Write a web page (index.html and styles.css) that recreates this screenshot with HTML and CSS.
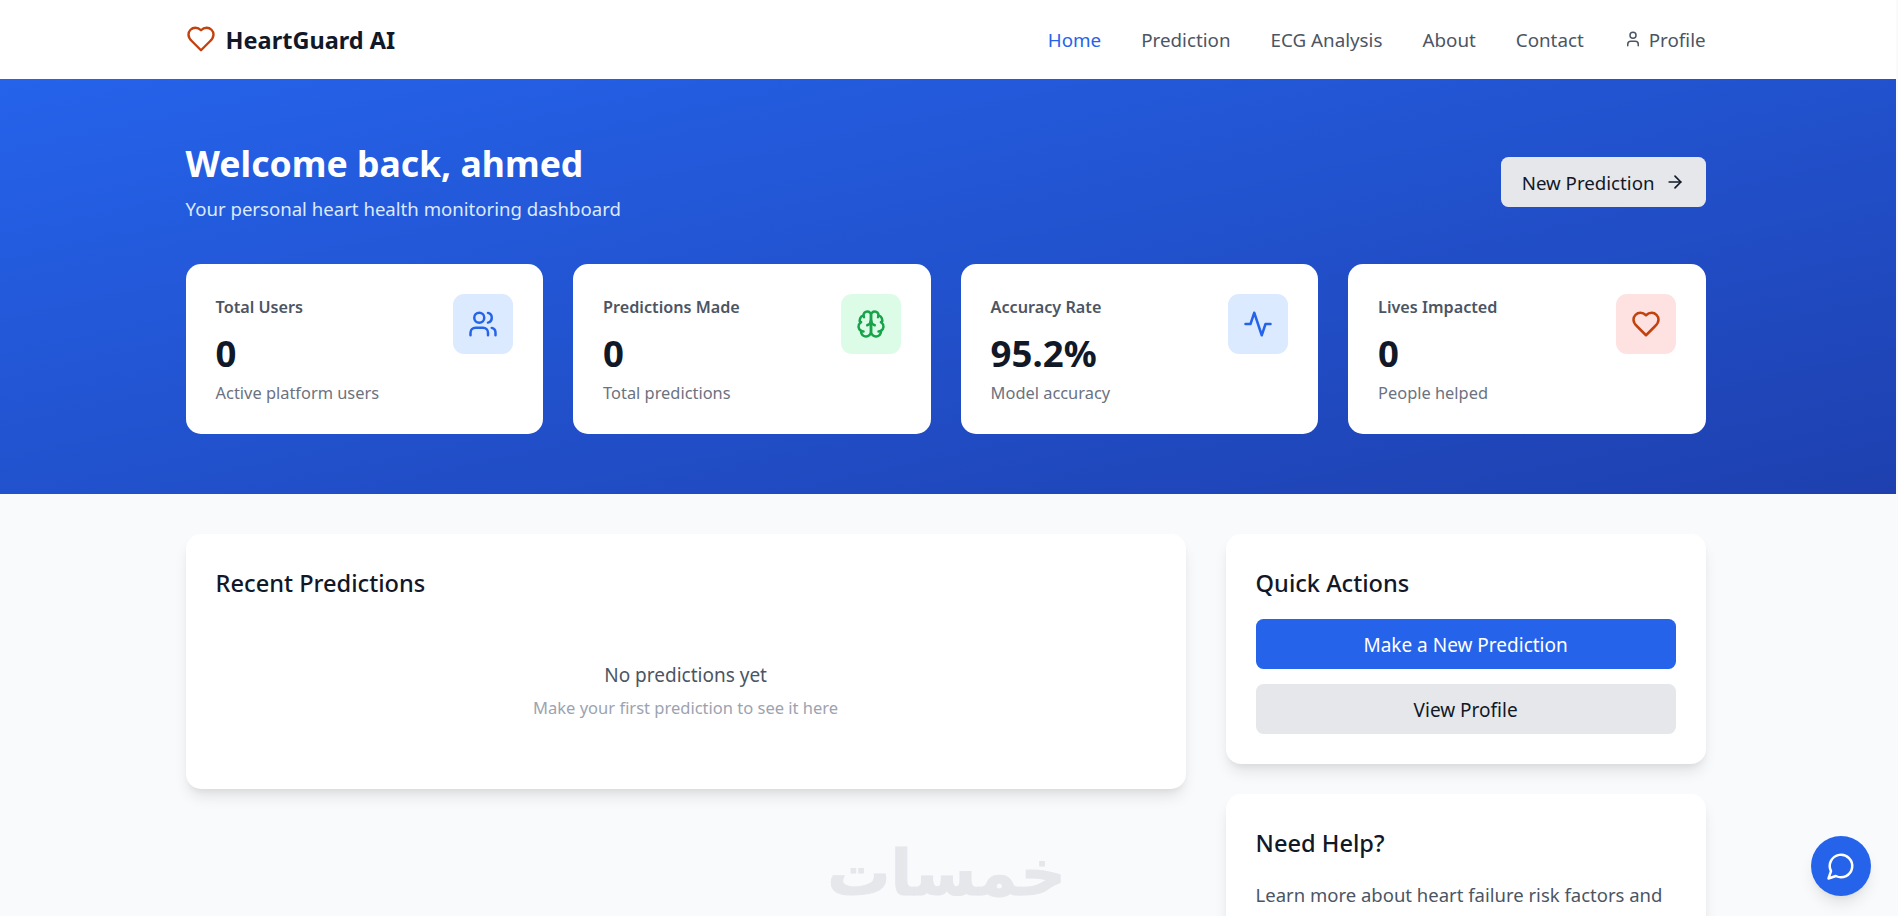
FILE: index.html
```html
<!DOCTYPE html>
<html lang="en">
<head>
<meta charset="utf-8">
<title>HeartGuard AI</title>
<link rel="stylesheet" href="styles.css">
</head>
<body>
<header class="nav">
  <div class="wrap nav-row">
    <a class="brand" href="#">
      <svg class="ico brand-ico" viewBox="0 0 24 24"><path d="M19 14c1.49-1.46 3-3.21 3-5.5A5.5 5.5 0 0 0 16.5 3c-1.76 0-3 .5-4.5 2-1.5-1.5-2.74-2-4.5-2A5.5 5.5 0 0 0 2 8.5c0 2.3 1.5 4.05 3 5.5l7 7Z"/></svg>
      <span>HeartGuard AI</span>
    </a>
    <nav class="links">
      <a class="link active" href="#">Home</a>
      <a class="link" href="#">Prediction</a>
      <a class="link" href="#">ECG Analysis</a>
      <a class="link" href="#">About</a>
      <a class="link" href="#">Contact</a>
      <a class="link profile" href="#">
        <svg class="ico user-ico" viewBox="0 0 24 24"><path d="M19 21v-2a4 4 0 0 0-4-4H9a4 4 0 0 0-4 4v2"/><circle cx="12" cy="7" r="4"/></svg>
        Profile
      </a>
    </nav>
  </div>
</header>

<section class="hero">
  <div class="wrap">
    <div class="hero-top">
      <div>
        <h1 class="hero-title">Welcome back, ahmed</h1>
        <p class="hero-sub">Your personal heart health monitoring dashboard</p>
      </div>
      <a class="btn btn-gray btn-hero" href="#">New Prediction
        <svg class="ico arrow-ico" viewBox="0 0 24 24"><path d="M5 12h14"/><path d="m12 5 7 7-7 7"/></svg>
      </a>
    </div>
    <div class="stats">
      <div class="stat">
        <div>
          <p class="stat-label">Total Users</p>
          <p class="stat-value">0</p>
          <p class="stat-note">Active platform users</p>
        </div>
        <div class="stat-icon tint-blue">
          <svg class="ico" viewBox="0 0 24 24"><path d="M16 21v-2a4 4 0 0 0-4-4H6a4 4 0 0 0-4 4v2"/><circle cx="9" cy="7" r="4"/><path d="M22 21v-2a4 4 0 0 0-3-3.87"/><path d="M16 3.13a4 4 0 0 1 0 7.75"/></svg>
        </div>
      </div>
      <div class="stat">
        <div>
          <p class="stat-label">Predictions Made</p>
          <p class="stat-value">0</p>
          <p class="stat-note">Total predictions</p>
        </div>
        <div class="stat-icon tint-green">
          <svg class="ico" viewBox="0 0 24 24"><path d="M12 5a3 3 0 1 0-5.997.125 4 4 0 0 0-2.526 5.77 4 4 0 0 0 .556 6.588A4 4 0 1 0 12 18Z"/><path d="M12 5a3 3 0 1 1 5.997.125 4 4 0 0 1 2.526 5.77 4 4 0 0 1-.556 6.588A4 4 0 1 1 12 18Z"/><path d="M15 13a4.5 4.5 0 0 1-3-4 4.5 4.5 0 0 1-3 4"/><path d="M17.599 6.5a3 3 0 0 0 .399-1.375"/><path d="M6.003 5.125A3 3 0 0 0 6.401 6.5"/><path d="M3.477 10.896a4 4 0 0 1 .585-.396"/><path d="M19.938 10.5a4 4 0 0 1 .585.396"/><path d="M6 18a4 4 0 0 1-1.967-.516"/><path d="M19.967 17.484A4 4 0 0 1 18 18"/></svg>
        </div>
      </div>
      <div class="stat">
        <div>
          <p class="stat-label">Accuracy Rate</p>
          <p class="stat-value">95.2%</p>
          <p class="stat-note">Model accuracy</p>
        </div>
        <div class="stat-icon tint-blue">
          <svg class="ico" viewBox="0 0 24 24"><path d="M22 12h-4l-3 9L9 3l-3 9H2"/></svg>
        </div>
      </div>
      <div class="stat">
        <div>
          <p class="stat-label">Lives Impacted</p>
          <p class="stat-value">0</p>
          <p class="stat-note">People helped</p>
        </div>
        <div class="stat-icon tint-red">
          <svg class="ico" viewBox="0 0 24 24"><path d="M19 14c1.49-1.46 3-3.21 3-5.5A5.5 5.5 0 0 0 16.5 3c-1.76 0-3 .5-4.5 2-1.5-1.5-2.74-2-4.5-2A5.5 5.5 0 0 0 2 8.5c0 2.3 1.5 4.05 3 5.5l7 7Z"/></svg>
        </div>
      </div>
    </div>
  </div>
</section>

<main class="wrap content">
  <section class="card recent">
    <h2 class="card-title">Recent Predictions</h2>
    <div class="empty">
      <p class="empty-main">No predictions yet</p>
      <p class="empty-sub">Make your first prediction to see it here</p>
    </div>
  </section>
  <aside class="side">
    <section class="card">
      <h2 class="card-title">Quick Actions</h2>
      <div class="actions">
        <a class="btn btn-blue" href="#">Make a New Prediction</a>
        <a class="btn btn-gray" href="#">View Profile</a>
      </div>
    </section>
    <section class="card">
      <h2 class="card-title">Need Help?</h2>
      <p class="help-text">Learn more about heart failure risk factors and</p>
    </section>
  </aside>
</main>

<div class="watermark" lang="ar" dir="rtl">خمسات</div>
<button class="chat" type="button" aria-label="Chat">
  <svg class="ico" viewBox="0 0 24 24"><path d="M7.9 20A9 9 0 1 0 4 16.1L2 22Z"/></svg>
</button>
</body>
</html>
```
FILE: styles.css
```css
* { box-sizing: border-box; }
html, body { height: 100%; }
body {
  margin: 0;
  overflow: hidden;
  background: #f9fafb;
  color: #111827;
  font-family: "Noto Sans", "Open Sans", sans-serif;
}
p, h1, h2 { margin: 0; }
a { text-decoration: none; color: inherit; }

.wrap { margin-left: 185.6px; width: 1520px; }
.ico { fill: none; stroke: currentColor; stroke-width: 2; stroke-linecap: round; stroke-linejoin: round; display: block; }

.nav { background: #fff; height: 79px; margin-right: 2px; }
.nav-row { height: 79px; display: flex; align-items: center; justify-content: space-between; }
.brand { display: flex; align-items: center; gap: 10px; font-size: 23.5px; font-weight: 700; color: #111827; }
.brand-ico { width: 30px; height: 30px; color: #c2410c; stroke-width: 1.9; margin-top: -1px; }
.links { display: flex; gap: 40px; align-items: center; }
.link { font-size: 18.8px; color: #4b5563; line-height: 24px; }
.link.active { color: #2563eb; }
.profile { display: flex; align-items: center; gap: 7px; }
.user-ico { width: 18px; height: 18px; margin-top: -2px; }

.hero { height: 415px; padding-top: 60px; margin-right: 2px; background: linear-gradient(to bottom right, #2563eb, #1e40af); }
.hero-top { display: flex; justify-content: space-between; align-items: flex-start; height: 125px; }
.hero-title { font-size: 35.6px; line-height: 48px; font-weight: 700; color: #fff; }
.hero-sub { font-size: 18.6px; line-height: 28px; color: #dbeafe; margin-top: 8px; }

.btn { display: flex; align-items: center; justify-content: center; height: 50px; padding-top: 2px; border-radius: 7.5px; font-size: 19px; }
.btn-gray { background: #e5e7eb; color: #111827; }
.btn-blue { background: #2563eb; color: #fff; }
.btn-hero { width: 205px; gap: 10px; margin-top: 18px; padding-top: 0; font-size: 18.7px; }
.arrow-ico { width: 20px; height: 20px; }

.stats { display: grid; grid-template-columns: repeat(4, 1fr); gap: 30px; }
.stat { height: 170px; padding: 30px; border-radius: 15px; background: #fff; display: flex; justify-content: space-between; align-items: flex-start; }
.stat-label { font-size: 16.2px; line-height: 24px; font-weight: 600; color: #4b5563; margin-top: 1px; }
.stat-value { font-size: 36.6px; line-height: 50px; font-weight: 700; color: #111827; margin-top: 9px; }
.stat-note { font-size: 16.4px; line-height: 24px; color: #6b7280; margin-top: 3px; }
.stat-icon { width: 60px; height: 60px; border-radius: 11px; display: flex; align-items: center; justify-content: center; }
.stat-icon .ico { width: 30px; height: 30px; }
.tint-blue { background: #dbeafe; color: #2563eb; }
.tint-green { background: #dcfce7; color: #16a34a; }
.tint-red { background: #fee2e2; color: #c2410c; }

.content { display: grid; grid-template-columns: 1fr 480px; gap: 40px; align-items: start; padding-top: 40px; }
.card { background: #fff; border-radius: 15px; padding: 30px; box-shadow: 0 10px 15px -3px rgba(0,0,0,.1), 0 4px 6px -2px rgba(0,0,0,.05); }
.card-title { font-size: 23.6px; line-height: 38px; font-weight: 500; color: #111827; }
.recent { height: 255px; }
.empty { text-align: center; padding-top: 59px; }
.empty-main { font-size: 19px; line-height: 28px; color: #4b5563; }
.empty-sub { font-size: 16.5px; line-height: 24px; color: #9ca3af; margin-top: 7px; }
.side { display: flex; flex-direction: column; gap: 30px; }
.actions { display: flex; flex-direction: column; gap: 15px; margin-top: 17px; }
.help-text { font-size: 18.5px; line-height: 30px; color: #4b5563; margin-top: 18px; }

.watermark {
  position: absolute;
  left: 838px;
  top: 834px;
  width: 228px;
  text-align: center;
  font-family: "DejaVu Sans", sans-serif;
  font-size: 63px;
  line-height: 80px;
  font-weight: 700;
  color: #e5e7eb;
  -webkit-text-stroke: 1px #e5e7eb;
  pointer-events: none;
}
.chat {
  position: fixed;
  right: 27px;
  bottom: 20px;
  width: 60px;
  height: 60px;
  padding: 0;
  border: 0;
  border-radius: 50%;
  background: #2563eb;
  color: #fff;
  display: flex;
  align-items: center;
  justify-content: center;
  box-shadow: 0 10px 15px -3px rgba(0,0,0,.1), 0 4px 6px -2px rgba(0,0,0,.05);
}
.chat .ico { width: 30px; height: 30px; }
```
